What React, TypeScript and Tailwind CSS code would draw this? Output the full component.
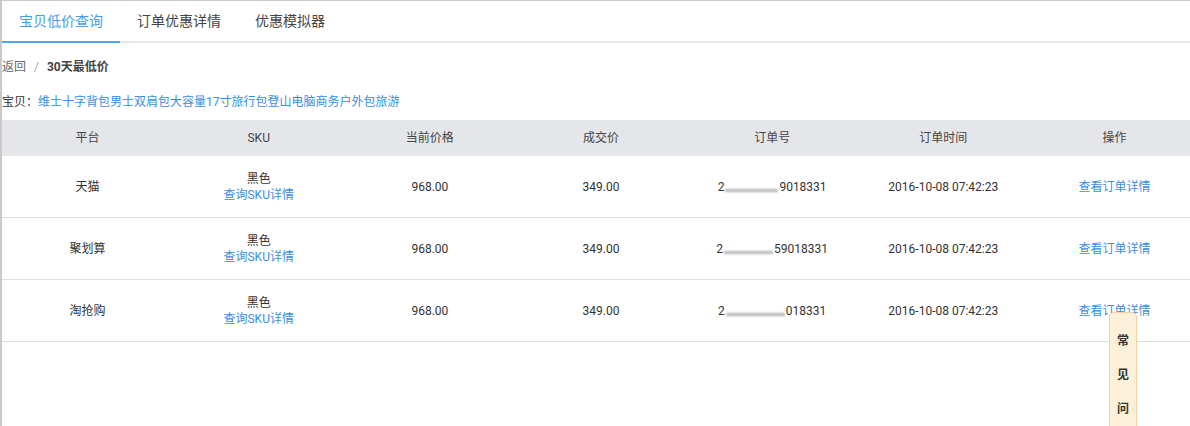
import React from 'react';

const font = { fontFamily: 'Roboto, "Noto Sans CJK SC", sans-serif' };

const rows = [
  { platform: '天猫', prefix: '2', suffix: '9018331', smudge: 'w-[53px]' },
  { platform: '聚划算', prefix: '2', suffix: '59018331', smudge: 'w-[49px]' },
  { platform: '淘抢购', prefix: '2', suffix: '018331', smudge: 'w-[59px]' },
];

const headers = ['平台', 'SKU', '当前价格', '成交价', '订单号', '订单时间', '操作'];

export default function App() {
  return (
    <div
      className="relative h-[426px] w-[1190px] overflow-hidden border-l-2 border-t border-[#c9c9c9] bg-white text-[#333]"
      style={font}
    >
      <div className="flex h-[42px] border-b-2 border-[#e6e6e6] text-[14px]">
        <div className="-mb-[2px] flex items-center border-b-2 border-[#55a3ea] px-[17px] text-[#4a9be6]">
          宝贝低价查询
        </div>
        <div className="flex items-center px-[17px] text-[#444]">订单优惠详情</div>
        <div className="flex items-center px-[17px] text-[#444]">优惠模拟器</div>
      </div>

      <div className="mt-[15px] flex items-center text-[12px]">
        <span className="text-[#666]">返回</span>
        <span className="mx-[8px] text-[#aaa]">/</span>
        <span className="font-bold text-[#444]">30天最低价</span>
      </div>

      <div className="mt-[17px] text-[12px]">
        <span className="text-[#333]">宝贝：</span>
        <span className="text-[#3a8ee0]">维士十字背包男士双肩包大容量17寸旅行包登山电脑商务户外包旅游</span>
      </div>

      <div className="mt-[9px] w-[1198px] text-[12px]">
        <div className="grid h-[36px] grid-cols-7 items-center bg-[#e5e6ea] text-[#444]">
          {headers.map((h) => (
            <div key={h} className="text-center">{h}</div>
          ))}
        </div>
        {rows.map((r) => (
          <div key={r.platform} className="grid h-[62px] grid-cols-7 items-center border-b border-[#dcdde2] text-[#333]">
            <div className="text-center">{r.platform}</div>
            <div className="flex flex-col items-center leading-[16px]">
              <span>黑色</span>
              <span className="text-[#3a8ee0]">查询SKU详情</span>
            </div>
            <div className="text-center">968.00</div>
            <div className="text-center">349.00</div>
            <div className="flex items-center justify-center">
              <span>{r.prefix}</span>
              <span className={`mx-[1px] mt-[7px] inline-block h-[3px] ${r.smudge} bg-[#b5b5b5] blur-[1px]`} />
              <span>{r.suffix}</span>
            </div>
            <div className="text-center">2016-10-08 07:42:23</div>
            <div className="text-center text-[#3a8ee0]">查看订单详情</div>
          </div>
        ))}
      </div>

      <div className="absolute left-[1107px] top-[311px] flex h-[130px] w-[28px] flex-col items-center gap-[16px] rounded-t-[5px] border border-[#f3d2a6] bg-[#fdf0d9] pt-[19px] text-[12px] font-bold text-[#333]">
        <span>常</span>
        <span>见</span>
        <span>问</span>
      </div>
    </div>
  );
}
